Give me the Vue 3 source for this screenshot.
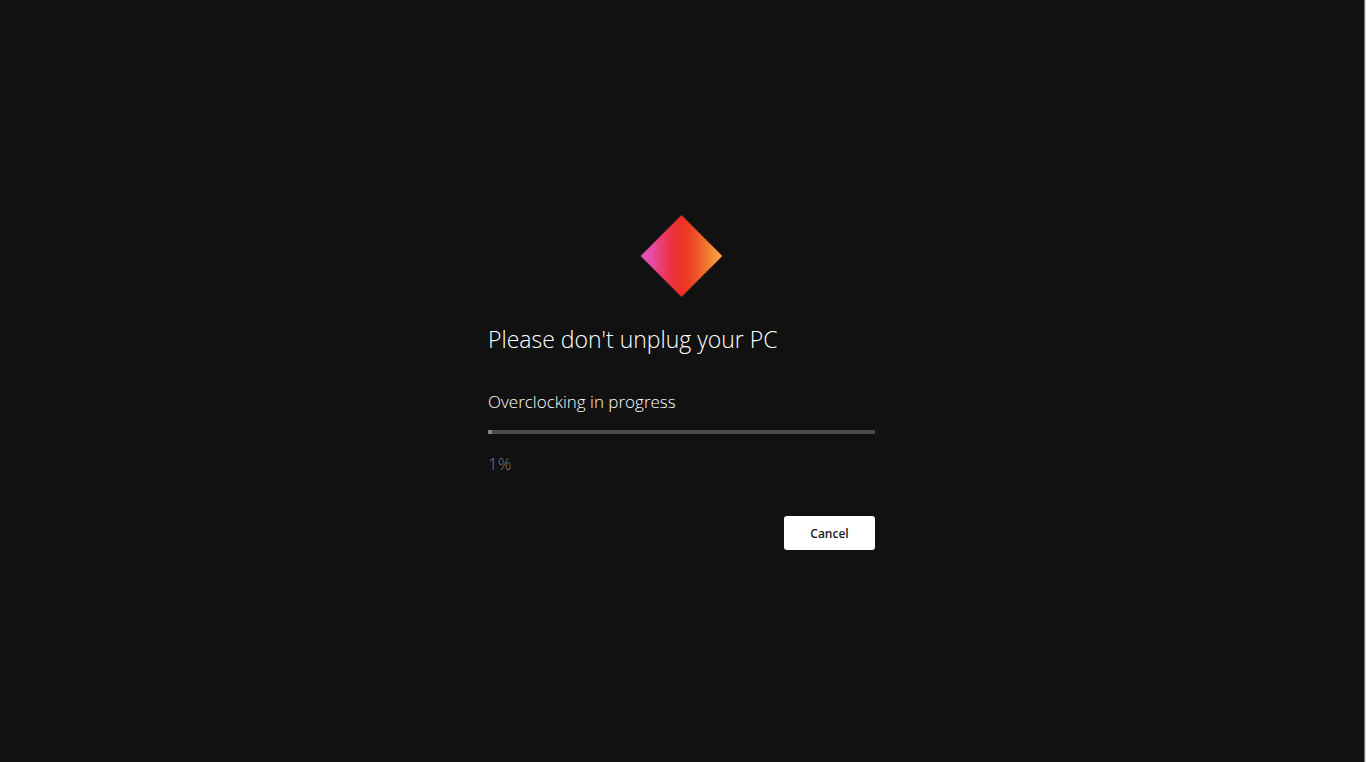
<script setup>
import { ref } from 'vue'

const progress = ref(1)
const running = ref(true)

function cancel() {
  running.value = false
}
</script>

<template>
  <main class="screen">
    <section class="panel">
      <svg class="logo" viewBox="0 0 83 84" aria-hidden="true">
        <defs>
          <linearGradient id="flame" x1="0" y1="0" x2="1" y2="0">
            <stop offset="0" stop-color="#e455c8" />
            <stop offset="0.12" stop-color="#e84cab" />
            <stop offset="0.25" stop-color="#ea3f72" />
            <stop offset="0.38" stop-color="#ec3240" />
            <stop offset="0.5" stop-color="#eb3223" />
            <stop offset="0.62" stop-color="#ec4527" />
            <stop offset="0.8" stop-color="#f0752f" />
            <stop offset="1" stop-color="#f4b04a" />
          </linearGradient>
        </defs>
        <path d="M41.5 1 L82.5 42 L41.5 83 L0.5 42 Z" fill="url(#flame)" stroke="#6b2022" stroke-width="1" stroke-opacity="0.6" />
      </svg>
      <h1 class="title">Please don't unplug your PC</h1>
      <label class="status" for="overclock">Overclocking in progress</label>
      <progress id="overclock" class="bar" max="100" :value="progress"></progress>
      <p class="percent">{{ progress }}%</p>
      <button class="cancel" type="button" :disabled="!running" @click="cancel">Cancel</button>
    </section>
  </main>
</template>

<style>
body {
  margin: 0;
  background: #111;
}
</style>

<style scoped>
.screen {
  box-sizing: border-box;
  min-height: 100vh;
  display: flex;
  justify-content: center;
  align-items: center;
  padding-right: 2px;
  border-right: 1px solid #d8d8d8;
  box-shadow: inset -1px 0 #777;
  background: #111;
  color: #fff;
  font-family: "Segoe UI", "Open Sans", "Noto Sans", sans-serif;
}

.panel {
  display: flex;
  flex-direction: column;
  width: 387px;
  max-width: 100%;
  padding-top: 2px;
}

.logo {
  align-self: center;
  width: 83px;
  height: 84px;
}

.title {
  margin: 25px 0 0;
  font-size: 23px;
  line-height: 32px;
  font-weight: 300;
}

.status {
  margin-top: 35px;
  font-size: 17px;
  line-height: 24px;
  font-weight: 300;
}

.bar {
  appearance: none;
  display: block;
  width: 100%;
  height: 4px;
  margin-top: 16px;
  border: 0;
  background: #4b4b4b;
}

.bar::-webkit-progress-bar {
  background: #4b4b4b;
}

.bar::-webkit-progress-value {
  background: #858585;
}

.percent {
  margin: 18px 0 0;
  font-size: 17px;
  line-height: 24px;
  font-weight: 300;
  color: #7c7c7c;
}

.cancel {
  align-self: flex-end;
  min-width: 91px;
  height: 34px;
  margin-top: 40px;
  padding: 0 24px;
  border: 0;
  border-radius: 3px;
  background: #fff;
  color: #1a1a1a;
  font-family: inherit;
  font-size: 12px;
  font-weight: 600;
}
</style>
